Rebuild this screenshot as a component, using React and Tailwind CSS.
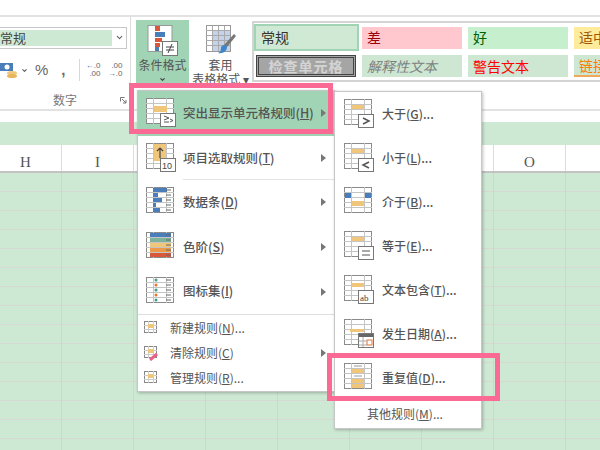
import { ChevronDown } from 'lucide-react';

const cjk = { fontFamily: '"Noto Sans CJK SC", "Liberation Sans", sans-serif' };
const columns = ['H', 'I', '', '', '', '', '', 'O', ''];
const rows = Array.from({ length: 15 });

// base table drawing, all menu icons start from this
function Sheet({ children, w = 30, h = 30 }) {
  return (
    <svg width={w} height={h} viewBox="0 0 30 30" className="shrink-0">
      <rect x="0.5" y="0.5" width="27" height="25" fill="#fff" stroke="#8a8a8a" />
      {[5.5, 10.5, 15.5, 20.5].map((y) => (
        <line key={y} x1="0" x2="28" y1={y} y2={y} stroke="#c4c4c4" />
      ))}
      {[7.5, 20.5].map((x) => (
        <line key={x} x1={x} x2={x} y1="0" y2="26" stroke="#c4c4c4" />
      ))}
      {children}
    </svg>
  );
}

function Badge({ children, w = 15, x = 14 }) {
  return (
    <>
      <rect x={x + 0.5} y="15.5" width={w} height="13" fill="#fff" stroke="#777" />
      {children}
    </>
  );
}

const amber = '#f0c67a';
const blue = '#4a7ebb';

function Stripes({ colors }) {
  return colors.map((c, i) => <rect key={i} x="8" y={1 + i * 5} width="12" height="4" fill={c} />);
}

function Dashes() {
  return [0, 1, 2, 3, 4].map((i) => (
    <line key={i} x1="20" x2="25" y1={3 + i * 5} y2={3 + i * 5} stroke="#666" />
  ));
}

const mainIcons = {
  highlight: (
    <Sheet>
      <rect x="8" y="8" width="13" height="6" fill={amber} />
      <Badge>
        <path d="M18 18l5 2-5 2M18 24h5M24 21l3 1.500-3 1.500" fill="none" stroke="#555" />
      </Badge>
    </Sheet>
  ),
  top: (
    <Sheet>
      <rect x="8" y="1" width="12" height="17" fill={amber} />
      <path d="M14 15V5M11 8l3-3 3 3" fill="none" stroke="#444" strokeWidth="1.200" />
      <Badge>
        <text x="16" y="26" fontSize="9" fontFamily="Liberation Sans" fill="#444">10</text>
      </Badge>
    </Sheet>
  ),
  bars: (
    <Sheet>
      {[14, 5, 9, 3, 7].map((b, i) => (
        <rect key={i} x="7" y={1 + i * 5} width={b} height="4" fill={blue} />
      ))}
      <Dashes />
    </Sheet>
  ),
  scale: (
    <Sheet>
      {['#4a7ebb', '#7fb29a', '#f0c67a', '#ec9a4a', '#d9583b'].map((c, i) => (
        <rect key={c} x="4" y={1 + i * 5} width="21" height="4" fill={c} />
      ))}
      <Dashes />
    </Sheet>
  ),
  sets: (
    <Sheet>
      {['#3f9c8a', '#e8732c', '#3f9c8a', '#e8732c', '#3f9c8a'].map((c, i) => (
        <circle key={i} cx="10" cy={3 + i * 5} r="1.500" fill={c} />
      ))}
      <Dashes />
    </Sheet>
  ),
};

const ruleIcons = {
  gt: (
    <Sheet>
      <rect x="8" y="6" width="12" height="4" fill={amber} />
      <Badge>
        <path d="M19 19l6 3-6 3" fill="none" stroke="#555" strokeWidth="1.500" />
      </Badge>
    </Sheet>
  ),
  lt: (
    <Sheet>
      <rect x="8" y="6" width="12" height="4" fill={amber} />
      <Badge>
        <path d="M25 19l-6 3 6 3" fill="none" stroke="#555" strokeWidth="1.500" />
      </Badge>
    </Sheet>
  ),
  between: (
    <Sheet>
      <rect x="1" y="6" width="6" height="5" fill={blue} />
      <rect x="21" y="6" width="6" height="5" fill={blue} />
      <rect x="8" y="14" width="12" height="5" fill={amber} />
    </Sheet>
  ),
  eq: (
    <Sheet>
      <rect x="8" y="6" width="12" height="4" fill={amber} />
      <Badge>
        <path d="M18 20h8M18 24h8" stroke="#555" strokeWidth="1.200" />
      </Badge>
    </Sheet>
  ),
  text: (
    <Sheet>
      <rect x="8" y="8" width="12" height="4" fill={amber} />
      <Badge>
        <text x="16" y="26" fontSize="9" fontFamily="Liberation Serif" fill="#444">ab</text>
      </Badge>
    </Sheet>
  ),
  date: (
    <Sheet>
      <rect x="6" y="10" width="14" height="3" fill={amber} />
      <rect x="14.500" y="14.500" width="15" height="14" fill="#fff" stroke="#777" />
      <rect x="15" y="15" width="14" height="3" fill="#666" />
      <rect x="23" y="21" width="5" height="5" fill="none" stroke="#e8732c" />
      <path d="M15 22h8M15 26h8M19 18v10" stroke="#aaa" />
    </Sheet>
  ),
  dup: (
    <Sheet>
      <Stripes colors={['#fff', amber, '#fff', amber, amber]} />
      <path d="M10 3h8M10 13h8" stroke="#999" />
    </Sheet>
  ),
};

function SmallIcon({ pen }) {
  return (
    <svg width="16" height="16" viewBox="0 0 16 16" className="shrink-0">
      <rect x="1.500" y="1.500" width="12" height="11" fill="#fff" stroke="#888" />
      <path d="M1 5.500h13M1 9.500h13M5.500 1v12M10.500 1v12" stroke="#ccc" />
      <rect x="5" y="4" width="5" height="4" fill={amber} />
      {pen && <path d="M7 15l7-6" stroke="#ec5f86" strokeWidth="3" />}
    </svg>
  );
}

function Arrow() {
  return (
    <svg width="5" height="8" viewBox="0 0 5 8" className="shrink-0">
      <path d="M0 0l5 4-5 4z" fill="#777" />
    </svg>
  );
}

function Label({ text, hot, dots, className = '' }) {
  return (
    <span className={`text-[#555] whitespace-nowrap ${className}`}>
      {text}(<span className="underline">{hot}</span>){dots && '...'}
    </span>
  );
}

function MainRow({ icon, text, hot, active, sep }) {
  return (
    <div className={`relative flex h-[44.6px] items-center pl-[8px] pr-[8px] ${active ? 'bg-[#a0d4b4]' : ''}`}>
      <div className="w-[37px]">{icon}</div>
      <Label text={text} hot={hot} className="text-[12.5px] font-medium" />
      <div className="ml-auto"><Arrow /></div>
      {sep && <div className="absolute bottom-0 left-[45px] right-0 h-px bg-[#e4e4e4]" />}
    </div>
  );
}

function SmallRow({ text, hot, pen, arrow }) {
  return (
    <div className="flex h-[25px] items-center pl-[5px] pr-[8px]">
      <div className="w-[27px]"><SmallIcon pen={pen} /></div>
      <Label text={text} hot={hot} dots={!arrow} className="text-[12px]" />
      {arrow && <div className="ml-auto"><Arrow /></div>}
    </div>
  );
}

function RuleRow({ icon, text, hot }) {
  return (
    <div className="flex h-[44px] items-center pl-[9px]">
      <div className="w-[38px]">{icon}</div>
      <Label text={text} hot={hot} dots className="text-[12px] font-medium" />
    </div>
  );
}

function StyleCell({ className = '', children }) {
  return <div className={`flex h-[22px] w-[100px] shrink-0 items-center pl-[5px] text-[14px] ${className}`}>{children}</div>;
}

function Ribbon() {
  return (
    <div className="flex h-[96px] border-y-2 border-y-[#e2e2e2] bg-white">
      {/* number group */}
      <div className="flex w-[131px] shrink-0 flex-col border-r border-[#dcdcdc]">
        <div className="mt-[10px] flex h-[22px] w-[127px] items-center border border-l-0 border-[#c8c8c8]">
          <div className="flex h-[16px] w-[112px] items-center bg-[#cde8d3] text-[13px] text-[#444]">常规</div>
          <ChevronDown size={9} strokeWidth={3} className="ml-[3px] text-[#666]" />
        </div>
        <div className="mt-[9px] flex h-[26px] items-center text-[#666]">
          <svg width="18" height="16" viewBox="0 0 18 16">
            <rect x="0" y="1" width="13" height="8" fill="#4a7ebb" />
            <circle cx="7" cy="5" r="2.500" fill="#fff" />
            <ellipse cx="12" cy="11" rx="5" ry="2" fill="#f0c67a" />
            <ellipse cx="12" cy="14" rx="5" ry="2" fill="#e8b45c" />
          </svg>
          <ChevronDown size={7} strokeWidth={4} className="ml-[3px]" />
          <span className="ml-[7px] text-[15px] font-medium" style={{ fontFamily: 'Liberation Sans' }}>%</span>
          <span className="ml-[13px] text-[15px] font-bold" style={{ fontFamily: 'Liberation Sans' }}>,</span>
          <div className="ml-[13px] h-[22px] w-px bg-[#d8d8d8]" />
          <div className="ml-[5px] w-[16px] text-right text-[8px] leading-[8px]" style={{ fontFamily: 'Liberation Sans' }}>
            <span className="text-[#2f6db5]">←</span>.0<br />.00
          </div>
          <div className="ml-[6px] w-[16px] text-right text-[8px] leading-[8px]" style={{ fontFamily: 'Liberation Sans' }}>
            .00<br /><span className="text-[#2f6db5]">→</span>.0
          </div>
        </div>
        <div className="relative mt-[8px] text-center text-[12px] text-[#777]">
          数字
          <svg width="7" height="7" viewBox="0 0 7 7" className="absolute right-[3px] top-[6px]">
            <path d="M0.500 0.500h4M0.500 0.500v4M2 2l4 4M6 3v3H3" fill="none" stroke="#777" />
          </svg>
        </div>
      </div>

      {/* conditional format button */}
      <div className="ml-[5px] mt-[3px] flex h-[64px] w-[53px] shrink-0 flex-col items-center bg-[#a0d4b4]">
        <svg width="32" height="32" viewBox="0 0 32 32" className="mt-[5px]">
          <rect x="1" y="0.500" width="24" height="26" fill="#fff" stroke="#999" />
          <rect x="8" y="1" width="5" height="5" fill="#d9583b" />
          <rect x="8" y="7" width="10" height="5" fill="#4a7ebb" />
          <rect x="8" y="13" width="7" height="4" fill="#d9583b" />
          <rect x="8" y="18" width="5" height="4" fill="#d9583b" />
          <rect x="8" y="22" width="4" height="4" fill="#4a7ebb" />
          <rect x="15.500" y="16.500" width="15" height="14" fill="#fff" stroke="#777" />
          <path d="M19 22h8M19 25h8M25 19l-4 9" stroke="#444" />
        </svg>
        <span className="mt-[1px] text-[12px] leading-[14px] text-[#555]">条件格式</span>
        <ChevronDown size={7} strokeWidth={4} className="mt-[4px] text-[#444]" />
      </div>

      {/* table format button */}
      <div className="mt-[3px] flex h-[66px] w-[63px] shrink-0 flex-col items-center">
        <svg width="32" height="32" viewBox="0 0 32 32" className="mt-[5px]">
          <rect x="1.500" y="0.500" width="24" height="26" fill="#fff" stroke="#999" />
          <rect x="7" y="5" width="18" height="21" fill="#c4d3ea" />
          <path d="M1 5.500h24M1 10.500h24M1 15.500h24M1 20.500h24M7.500 1v25M13.500 1v25M19.500 1v25" stroke="#aaa" />
          <path d="M29 9l2 2-9 11-3-2z" fill="#777" />
          <path d="M16 22c3-3 5-2 6 0 0 4-4 7-9 6 3-1 3-4 3-6z" fill="#3f86c8" />
        </svg>
        <span className="mt-[1px] text-[12px] leading-[14px] text-[#555]">套用</span>
        <span className="whitespace-nowrap text-[12px] leading-[14px] text-[#555]">表格格式 ▾</span>
      </div>

      {/* cell styles gallery */}
      <div className="mt-[4px] flex h-[61px] grow flex-col gap-[3px] overflow-hidden border-y-2 border-l-2 border-[#d4d4d4] pt-px">
        <div className="flex h-[27px] items-center gap-[6px]" style={cjk}>
          <div className="flex h-[27px] w-[105px] shrink-0 items-center border-2 border-[#a0d4b4] bg-[#cfe9d5] pl-[5px] text-[14px] text-[#333]">常规</div>
          <StyleCell className="-ml-[3px] bg-[#ffc7ce] text-[#9c0006]">差</StyleCell>
          <StyleCell className="bg-[#c6efce] text-[#006100]">好</StyleCell>
          <StyleCell className="bg-[#ffeb9c] text-[#9c5700]">适中</StyleCell>
        </div>
        <div className="flex h-[24px] items-center gap-[6px]">
          <div className="ml-[2px] flex h-[22px] w-[100px] shrink-0 items-center justify-center border-[3px] border-double border-[#444] bg-[#a5a5a5] text-[14px] font-bold tracking-[1px] text-[#d4d4d4]">检查单元格</div>
          <StyleCell className="bg-[#cde7d3] italic text-[#7f7f7f]">解释性文本</StyleCell>
          <StyleCell className="bg-[#cde7d3] text-[#ff0000]">警告文本</StyleCell>
          <StyleCell className="border-b-2 border-b-[#f0a95a] bg-[#cde7d3] text-[#fa7d00]">链接</StyleCell>
        </div>
      </div>
    </div>
  );
}

export default function App() {
  return (
    <div className="relative h-[450px] w-[600px] overflow-hidden bg-white" style={cjk}>
      <div className="h-[15px]" />
      <Ribbon />
      <div className="h-[11px]" />
      <div className="h-[23px] bg-[#cde8d3]" />

      {/* column headers */}
      <div className="-ml-[10px] flex h-[28px] border-b-2 border-[#c2c2c2] bg-white">
        {columns.map((c, i) => (
          <div
            key={i}
            className="flex w-[72px] shrink-0 items-end justify-center border-r border-[#dcdcdc] pb-[1px] text-[15px] leading-[15px] text-[#555]"
            style={{ fontFamily: '"Liberation Serif", serif' }}
          >
            {c}
          </div>
        ))}
      </div>

      {/* sheet grid */}
      <div className="-ml-[10px]">
        {rows.map((_, r) => (
          <div key={r} className="flex h-[19px]">
            {columns.map((_, i) => (
              <div key={i} className="w-[72px] shrink-0 border-r border-b border-r-[#dccfcf] border-b-[#d6d9d2] bg-[#cde8d3]" />
            ))}
          </div>
        ))}
      </div>

      {/* first menu */}
      <div className="absolute left-[137px] top-[90px] w-[198px] border border-[#c6c6c6] bg-white shadow-[1px_1px_3px_rgba(0,0,0,0.25)]">
        <MainRow icon={mainIcons.highlight} text="突出显示单元格规则" hot="H" active />
        <MainRow icon={mainIcons.top} text="项目选取规则" hot="T" sep />
        <MainRow icon={mainIcons.bars} text="数据条" hot="D" />
        <MainRow icon={mainIcons.scale} text="色阶" hot="S" />
        <MainRow icon={mainIcons.sets} text="图标集" hot="I" />
        <div className="h-[2px] border-t border-[#dedede]" />
        <SmallRow text="新建规则" hot="N" />
        <SmallRow text="清除规则" hot="C" pen arrow />
        <SmallRow text="管理规则" hot="R" />
      </div>

      {/* second menu */}
      <div className="absolute left-[334px] top-[91px] w-[148px] border border-[#c6c6c6] bg-white shadow-[1px_1px_3px_rgba(0,0,0,0.25)]">
        <RuleRow icon={ruleIcons.gt} text="大于" hot="G" />
        <RuleRow icon={ruleIcons.lt} text="小于" hot="L" />
        <RuleRow icon={ruleIcons.between} text="介于" hot="B" />
        <RuleRow icon={ruleIcons.eq} text="等于" hot="E" />
        <RuleRow icon={ruleIcons.text} text="文本包含" hot="T" />
        <RuleRow icon={ruleIcons.date} text="发生日期" hot="A" />
        <RuleRow icon={ruleIcons.dup} text="重复值" hot="D" />
        <div className="flex h-[28px] items-center pl-[32px]">
          <Label text="其他规则" hot="M" dots className="text-[12px]" />
        </div>
      </div>

      {/* pink callouts */}
      <div className="absolute left-[129px] top-[83px] h-[51px] w-[204px] border-[5px] border-[#fb6a94]" />
      <div className="absolute left-[327px] top-[353px] h-[48px] w-[173px] border-[5px] border-[#fb6a94]" />
    </div>
  );
}
